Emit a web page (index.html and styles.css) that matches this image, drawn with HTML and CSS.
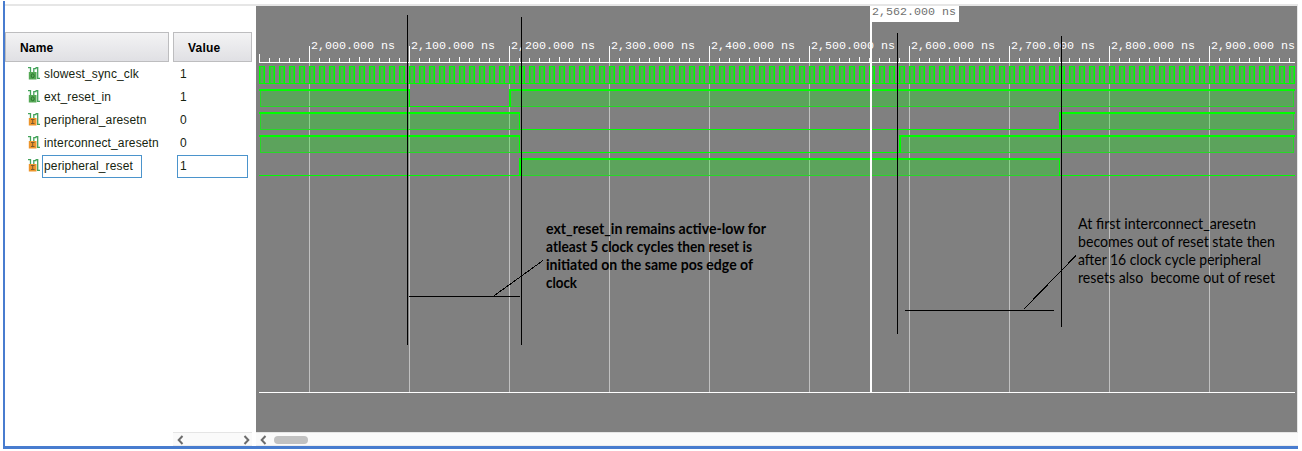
FILE: index.html
```html
<!DOCTYPE html>
<html lang="en">
<head>
<meta charset="utf-8">
<title>Reset waveform</title>
<link rel="stylesheet" href="styles.css">
</head>
<body>
<svg class="defs" width="0" height="0" aria-hidden="true">
  <symbol id="sig" viewBox="0 0 12 13">
    <path d="M0 .7H3M2.500 0V6M5.800 1.700H8.500M5.800 1V6M9.700 0V11.500M7.500 .7H9.700M9 11.300H12" fill="none" stroke="#43a35a" stroke-width="1.300"/>
    <rect x=".8" y="5" width="7.700" height="7.500" fill="currentColor"/>
  </symbol>
  <symbol id="sig-in" viewBox="0 0 12 13">
    <use href="#sig"/><ellipse cx="4.700" cy="8.800" rx="1.500" ry="2" fill="none" stroke="#28732d"/>
  </symbol>
  <symbol id="sig-out" viewBox="0 0 12 13">
    <use href="#sig"/><path d="M3 6.500H6.500M4.700 6V11M3 10.500H6.500" stroke="#7b5a30" fill="none"/>
  </symbol>
</svg>
<main class="viewer">
  <section class="names">
    <h2 class="head">Name</h2>
    <ul class="list">
      <li><svg class="icon in"><use href="#sig-in"/></svg><span>slowest_sync_clk</span></li>
      <li><svg class="icon in"><use href="#sig-in"/></svg><span>ext_reset_in</span></li>
      <li><svg class="icon out"><use href="#sig-out"/></svg><span>peripheral_aresetn</span></li>
      <li><svg class="icon out"><use href="#sig-out"/></svg><span>interconnect_aresetn</span></li>
      <li><svg class="icon out"><use href="#sig-out"/></svg><span class="selected">peripheral_reset</span></li>
    </ul>
  </section>
  <section class="values">
    <h2 class="head">Value</h2>
    <ul class="list">
      <li><span>1</span></li><li><span>1</span></li><li><span>0</span></li><li><span>0</span></li><li><span class="selected">1</span></li>
    </ul>
    <div class="scroll">
      <svg class="arrow" viewBox="0 0 7 10"><path d="M5.500 1L1.700 5L5.500 9"/></svg>
      <svg class="arrow" viewBox="0 0 7 10"><path d="M1.500 1L5.300 5L1.500 9"/></svg>
    </div>
  </section>
  <section class="waves">
    <svg class="plot" viewBox="256 6 1041 426">
      <defs>
        <pattern id="clock" x="259" y="66" width="10" height="18" patternUnits="userSpaceOnUse">
          <rect x="0" y="0" width="6" height="18" class="fill"/>
          <path class="hi" d="M0 0H6V18H5V1H1V18H0ZM0 17H10V18H0Z"/>
          <path class="soft" d="M1 1H2V17H1ZM4 1H5V17H4Z"/>
        </pattern>
        <pattern id="minor" x="259" y="58" width="10" height="4" patternUnits="userSpaceOnUse"><rect width="1" height="4" fill="#fff"/></pattern>
        <pattern id="mid" x="259" y="57" width="100" height="5" patternUnits="userSpaceOnUse"><rect width="1" height="5" fill="#fff"/></pattern>
        <pattern id="major" x="309" y="46" width="100" height="16" patternUnits="userSpaceOnUse"><rect width="1" height="16" fill="#fff"/></pattern>
        <pattern id="grid" x="309" y="63" width="100" height="329" patternUnits="userSpaceOnUse"><rect width="1" height="329" fill="#c0c0c0"/></pattern>
      </defs>
      <rect x="309" y="63" width="986" height="329" fill="url(#grid)"/>
      <g fill="#fff">
        <rect x="259" y="58" width="1036" height="4" fill="url(#minor)"/>
        <rect x="259" y="57" width="1036" height="5" fill="url(#mid)"/>
        <rect x="309" y="46" width="986" height="16" fill="url(#major)"/>
        <rect x="259" y="54" width="1" height="8"/>
        <rect x="259" y="62" width="1036" height="1"/>
        <rect x="259" y="392" width="1036" height="1"/>
      </g>
      <g class="time">
        <text x="311" y="49">2,000.000 ns</text><text x="411" y="49">2,100.000 ns</text>
        <text x="511" y="49">2,200.000 ns</text><text x="611" y="49">2,300.000 ns</text>
        <text x="711" y="49">2,400.000 ns</text><text x="811" y="49">2,500.000 ns</text>
        <text x="911" y="49">2,600.000 ns</text><text x="1011" y="49">2,700.000 ns</text>
        <text x="1111" y="49">2,800.000 ns</text><text x="1211" y="49">2,900.000 ns</text>
      </g>
      <rect x="259" y="66" width="1036" height="18" fill="url(#clock)"/>
      <path class="fill" d="M260 89H410V107H260ZM509 89H1294V107H509ZM260 112H520V130H260ZM1059 112H1294V130H1059ZM260 135H520V153H260ZM899 135H1294V153H899ZM519 158H1060V176H519Z"/>
      <path class="edge" d="M260.500 91V106.500H409M509 106.500H1293.500V91M260.500 114V129.500H519M1059 129.500H1293.500V114M260.500 137V152.500H519M899 152.500H1293.500V137M519 175.500H1059"/>
      <g class="hi">
        <path d="M259 89H410V106H509V89H1295V91H511V107H409V91H259Z"/>
        <path d="M259 112H520V129H519V114H259ZM519 129H1060V130H519ZM1059 112H1295V114H1061V130H1059Z"/>
        <path d="M259 135H520V152H899V135H1295V137H901V153H519V137H259Z"/>
        <path d="M259 175H519V158H1060V175H1295V176H1059V160H521V176H259Z"/>
      </g>
      <rect x="870" y="6" width="2" height="386" fill="#fff"/>
      <rect x="871" y="6" width="88" height="16" fill="#fff"/>
      <text class="time cursor" x="872" y="15">2,562.000 ns</text>
      <g fill="#000">
        <rect x="407" y="15" width="1" height="330"/><rect x="521" y="17" width="1" height="328"/>
        <rect x="897" y="33" width="1" height="301"/><rect x="1061" y="36" width="1" height="291"/>
        <rect x="409" y="296" width="111" height="1"/><rect x="905" y="310" width="149" height="1"/>
      </g>
      <path class="leader" d="M493 296.500L543 260.500M1024 309L1076 255.500"/>
      <g class="note strong">
        <text x="546" y="234" textLength="220" lengthAdjust="spacingAndGlyphs">ext_reset_in remains active-low for</text>
        <text x="546" y="252" textLength="206" lengthAdjust="spacingAndGlyphs">atleast 5 clock cycles then reset is</text>
        <text x="546" y="270" textLength="207" lengthAdjust="spacingAndGlyphs">initiated on the same pos edge of</text>
        <text x="546" y="288" textLength="31" lengthAdjust="spacingAndGlyphs">clock</text>
      </g>
      <g class="note">
        <text x="1078" y="229" textLength="178" lengthAdjust="spacingAndGlyphs">At first interconnect_aresetn</text>
        <text x="1078" y="247" textLength="197" lengthAdjust="spacingAndGlyphs">becomes out of reset state then</text>
        <text x="1078" y="265" textLength="183" lengthAdjust="spacingAndGlyphs">after 16 clock cycle peripheral</text>
        <text x="1078" y="283" textLength="197" lengthAdjust="spacingAndGlyphs">resets also &#160;become out of reset</text>
      </g>
    </svg>
    <div class="scroll wide">
      <svg class="arrow" viewBox="0 0 7 10"><path d="M5.500 1L1.700 5L5.500 9"/></svg>
      <span class="thumb"></span>
    </div>
  </section>
</main>
</body>
</html>
```
FILE: styles.css
```css
* { box-sizing: border-box; }
body { margin: 0; background: #fff; font: 12px "Liberation Sans", Arial, sans-serif; color: #16240f; overflow: hidden; }
.defs { display: block; }
.viewer {
  display: flex; width: 1295px; height: 448px; margin: 1px 0 0 3px;
  border-left: 2px solid #487ccf; border-bottom: 3px solid #487ccf;
  padding-top: 3px;
}
.names, .values { border-top: 2px solid #e6e6e6; padding-top: 26px; display: flex; flex-direction: column; }
.names { width: 168px; }
.values { width: 83px; }
.head {
  margin: 0; width: 164px; height: 30px; padding-left: 14px; border: 1px solid #bdbdbf;
  background: linear-gradient(#f3f3f4, #e0e0e4); color: #000; font-size: 12px; line-height: 30px; letter-spacing: .2px;
}
.values .head { width: 79px; }
.list { list-style: none; margin: 1px 0 0; padding: 0; flex: 1; }
.list li { display: flex; align-items: center; height: 23px; white-space: nowrap; }
.names li { padding-left: 23px; }
.icon { width: 12px; height: 13px; margin: -2px 2px 0 0; flex: none; }
.in { color: #55a855; }
.out { color: #ed952c; }
.list span { height: 23px; line-height: 20px; padding: 0 1px; border: 1px solid transparent; letter-spacing: .14px; }
.names span { width: 100px; }
.values span { width: 71px; margin-left: 4px; padding-left: 2px; }
.list .selected { border-color: #4b94cc; }
.scroll {
  height: 14px; width: 79px; border-top: 1px solid #e5e5e5; border-bottom: 1px solid #ededed; background: #fafafa;
  display: flex; align-items: center; justify-content: space-between; padding: 2px 2px 0 4px;
}
.arrow { width: 7px; height: 10px; flex: none; }
.arrow path { fill: none; stroke: #6c6c6c; stroke-width: 2; }
.waves { width: 1042px; border-top: 2px solid #e6e6e6; border-right: 1px solid #e6e6e6; }
.plot { display: block; width: 1041px; height: 426px; background: #808080; shape-rendering: crispEdges; }
.scroll.wide { width: 1042px; justify-content: flex-start; gap: 7px; padding: 1px 0 0 4px; }
.thumb { width: 34px; height: 8px; border-radius: 4px; background: #c1c1c1; }
.fill { fill: #00ff00; fill-opacity: .28; }
.hi { fill: #00ff00; }
.soft { fill: #00ff00; fill-opacity: .5; }
.edge { fill: none; stroke: #26d926; stroke-width: 1; }
.time { font: 11.667px "Liberation Mono", "Courier New", monospace; fill: #fff; }
.cursor { fill: #707070; }
.leader { fill: none; stroke: #000; stroke-width: 1; }
.note { font: 15px Lato, sans-serif; fill: #000; }
.strong { font-weight: 700; }
```
